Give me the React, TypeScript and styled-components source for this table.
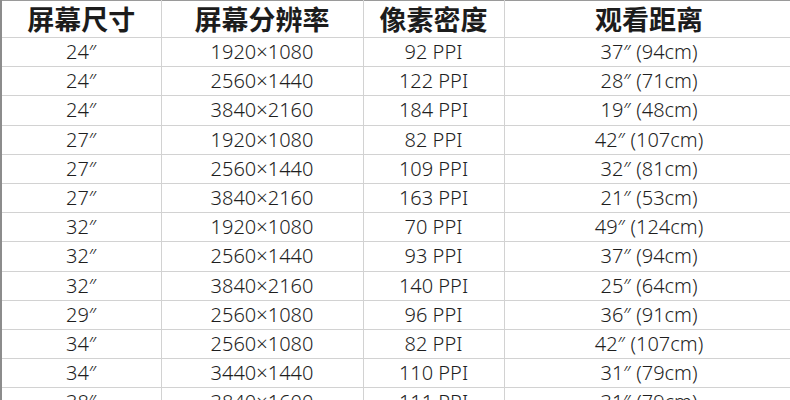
import styled, { createGlobalStyle } from 'styled-components';

const GlobalStyle = createGlobalStyle`
	html, body {
		margin: 0;
		padding: 0;
		background: #ffffff;
		overflow: hidden;
	}
`;

const rows: [string, string, string, string][] = [
	['24″', '1920×1080', '92 PPI', '37″ (94cm)'],
	['24″', '2560×1440', '122 PPI', '28″ (71cm)'],
	['24″', '3840×2160', '184 PPI', '19″ (48cm)'],
	['27″', '1920×1080', '82 PPI', '42″ (107cm)'],
	['27″', '2560×1440', '109 PPI', '32″ (81cm)'],
	['27″', '3840×2160', '163 PPI', '21″ (53cm)'],
	['32″', '1920×1080', '70 PPI', '49″ (124cm)'],
	['32″', '2560×1440', '93 PPI', '37″ (94cm)'],
	['32″', '3840×2160', '140 PPI', '25″ (64cm)'],
	['29″', '2560×1080', '96 PPI', '36″ (91cm)'],
	['34″', '2560×1080', '82 PPI', '42″ (107cm)'],
	['34″', '3440×1440', '110 PPI', '31″ (79cm)'],
	['38″', '3840×1600', '111 PPI', '31″ (79cm)'],
];

const headers = ['屏幕尺寸', '屏幕分辨率', '像素密度', '观看距离'];
const widths = [160, 202, 141, 290];

const App = () => {
	return (
		<>
			<GlobalStyle />
			<Sheet>
				<colgroup>
					{widths.map((w, i) => (
						<col key={i} style={{ width: w }} />
					))}
				</colgroup>
				<thead>
					<tr>
						{headers.map((h) => (
							<HeadCell key={h}>{h}</HeadCell>
						))}
					</tr>
				</thead>
				<tbody>
					{rows.map((r, i) => (
						<tr key={i}>
							{r.map((c, j) => (
								<Cell key={j}>{c}</Cell>
							))}
						</tr>
					))}
				</tbody>
			</Sheet>
		</>
	);
};

export default App;

const Sheet = styled.table`
	width: 793px;
	table-layout: fixed;
	border-collapse: collapse;
	border-top: 1px solid #9a9a9a;
	border-left: 2px solid #8c8c8c;
	color: #1c1c1c;
`;

const HeadCell = styled.th`
	height: 36px;
	padding: 0;
	font-family: 'Noto Sans CJK SC', sans-serif;
	font-size: 27px;
	font-weight: 700;
	line-height: 36px;
	text-align: center;
	border-right: 1px solid #d2d2d2;
	border-bottom: 1px solid #d2d2d2;
`;

const Cell = styled.td`
	height: 28.2px;
	padding: 0;
	font-family: 'Noto Sans', 'Noto Sans CJK SC', sans-serif;
	font-size: 20px;
	font-weight: 300;
	line-height: 28px;
	text-align: center;
	color: #1e1e1e;
	border-right: 1px solid #d2d2d2;
	border-bottom: 1px solid #d2d2d2;
	white-space: nowrap;
`;
